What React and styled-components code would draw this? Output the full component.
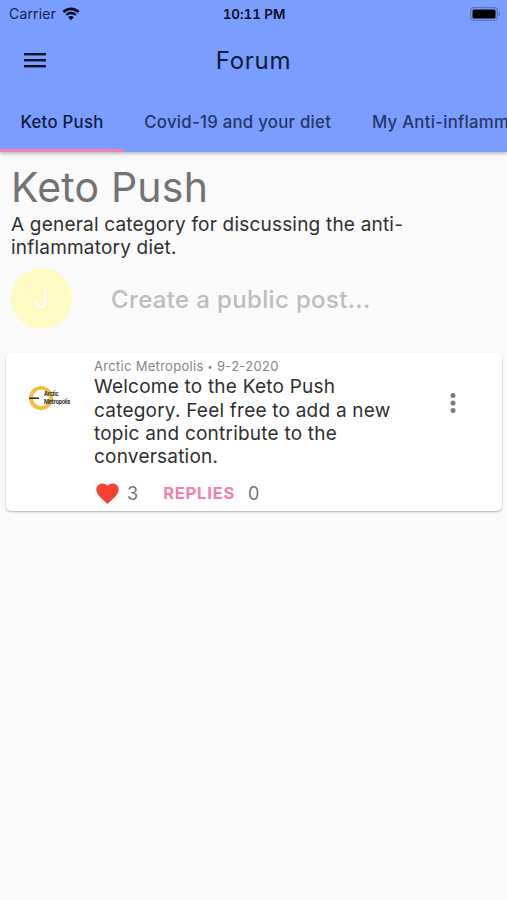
import React from "react";
import styled, { createGlobalStyle } from "styled-components";

const tabs = ["Keto Push", "Covid-19 and your diet", "My Anti-inflammatory"];

const posts = [
  {
    id: 1,
    author: "Arctic Metropolis",
    date: "9-2-2020",
    body: [
      "Welcome to the Keto Push",
      "category. Feel free to add a new",
      "topic and contribute to the",
      "conversation.",
    ],
    likes: 3,
    replies: 0,
  },
];

const WifiIcon = () => (
  <svg width="18" height="14" viewBox="0 0 20 15" fill="none" stroke="#0a0f20">
    <path d="M1.5 5.3a12 12 0 0 1 17 0" strokeWidth="3" />
    <path d="M4.7 8.6a7.5 7.5 0 0 1 10.6 0" strokeWidth="2.7" />
    <path d="M10 14.4l-3.2-3.3a4.5 4.5 0 0 1 6.4 0z" fill="#0a0f20" stroke="none" />
  </svg>
);

const BatteryIcon = () => (
  <svg width="31" height="14" viewBox="0 0 31 14">
    <rect x="0.7" y="0.7" width="26.6" height="12.6" rx="3.4" fill="none" stroke="#5a75bb" strokeWidth="1.2" />
    <rect x="2.5" y="2.5" width="23" height="9" rx="1.6" fill="#000" />
    <path d="M28.6 4.8c1.9.6 1.9 3.8 0 4.4z" fill="#5a75bb" />
  </svg>
);

const MenuIcon = () => (
  <svg width="24" height="17" viewBox="0 0 24 17" fill="#0b1020">
    <rect x="1" y="1" width="22" height="2.4" />
    <rect x="1" y="7" width="22" height="2.4" />
    <rect x="1" y="13" width="22" height="2.4" />
  </svg>
);

const LogoMark = () => (
  <svg width="44" height="28" viewBox="0 0 44 28">
    <circle cx="13" cy="13" r="10.1" fill="none" stroke="#f3bf3b" strokeWidth="3.8" />
    <rect x="1" y="12.5" width="10" height="1.5" fill="#2b2b2b" />
  </svg>
);

const HeartIcon = () => (
  <svg width="27" height="27" viewBox="0 0 24 24" fill="#f44336">
    <path d="M12 21.35l-1.45-1.32C5.4 15.36 2 12.28 2 8.5 2 5.42 4.42 3 7.5 3c1.74 0 3.41.81 4.5 2.09C13.09 3.81 14.76 3 16.5 3 19.58 3 22 5.42 22 8.5c0 3.78-3.4 6.86-8.55 11.54L12 21.35z" />
  </svg>
);

const MoreIcon = () => (
  <svg width="6" height="20" viewBox="0 0 6 20" fill="#7b7b7b">
    <circle cx="3" cy="2.6" r="2.5" />
    <circle cx="3" cy="10" r="2.5" />
    <circle cx="3" cy="17.4" r="2.5" />
  </svg>
);

const Post = ({ post }) => (
  <Card>
    <LogoColumn>
      <Logo>
        <LogoMark />
        <LogoText>
          <div>Arctic</div>
          <div>Metropolis</div>
        </LogoText>
      </Logo>
    </LogoColumn>
    <PostContent>
      <Meta>
        {post.author} <Dot>•</Dot> {post.date}
      </Meta>
      {post.body.map((line) => (
        <PostLine key={line}>{line}</PostLine>
      ))}
      <Actions>
        <HeartIcon />
        <Count>{post.likes}</Count>
        <Replies>REPLIES</Replies>
        <Count>{post.replies}</Count>
      </Actions>
    </PostContent>
    <MoreButton aria-label="More">
      <MoreIcon />
    </MoreButton>
  </Card>
);

const App = () => {
  return (
    <>
      <GlobalStyle />
      <Screen>
        <Header>
          <StatusBar>
            <Carrier>
              <span>Carrier</span>
              <WifiIcon />
            </Carrier>
            <Time>10:11 PM</Time>
            <Battery>
              <BatteryIcon />
            </Battery>
          </StatusBar>
          <Toolbar>
            <MenuButton aria-label="Menu">
              <MenuIcon />
            </MenuButton>
            <Title>Forum</Title>
          </Toolbar>
          <Tabs>
            {tabs.map((tab, index) => (
              <Tab key={tab} $active={index === 0}>
                {tab}
              </Tab>
            ))}
          </Tabs>
        </Header>
        <Heading>Keto Push</Heading>
        <Description>
          A general category for discussing the anti-
          <br />
          inflammatory diet.
        </Description>
        <CreatePost>
          <Avatar>J</Avatar>
          <Prompt>Create a public post...</Prompt>
        </CreatePost>
        {posts.map((post) => (
          <Post key={post.id} post={post} />
        ))}
      </Screen>
    </>
  );
};

export default App;

const GlobalStyle = createGlobalStyle`
  * {
    box-sizing: border-box;
  }

  body {
    margin: 0;
    background-color: #fafafa;
    font-family: Inter, "Liberation Sans", sans-serif;
  }

  svg {
    display: block;
    flex-shrink: 0;
  }

  button {
    display: flex;
    padding: 0;
    border: none;
    background: none;
  }
`;

const Screen = styled.div`
  height: 900px;
  overflow: hidden;
  background-color: #fafafa;
`;

const Header = styled.header`
  height: 152px;
  background-color: #7a9eff;
  box-shadow: 0 1px 4px rgba(0, 0, 0, 0.35);
`;

const StatusBar = styled.div`
  display: grid;
  grid-template-columns: 1fr auto 1fr;
  align-items: center;
  height: 27px;
  padding: 0 6px 0 9px;
`;

const Carrier = styled.div`
  display: flex;
  align-items: center;
  gap: 6px;
  color: #17213f;
  font-size: 14px;
  letter-spacing: 0.15px;
`;

const Time = styled.div`
  margin-right: 2px;
  color: #0b1124;
  font-size: 13.5px;
  font-weight: 600;
  font-feature-settings: "tnum";
  letter-spacing: -0.1px;
`;

const Battery = styled.div`
  display: flex;
  justify-content: flex-end;
`;

const Toolbar = styled.div`
  display: grid;
  grid-template-columns: 60px 1fr 60px;
  align-items: center;
  height: 66px;
`;

const MenuButton = styled.button`
  margin-left: 23px;
`;

const Title = styled.div`
  color: #101a35;
  font-size: 24px;
  font-weight: 400;
  letter-spacing: 0.7px;
  text-align: center;
`;

const Tabs = styled.nav`
  display: flex;
  height: 59px;
  overflow: hidden;
`;

const Tab = styled.div`
  flex-shrink: 0;
  padding: 0 20.4px;
  border-bottom: 3px solid ${(props) => (props.$active ? "#f57fae" : "transparent")};
  color: ${(props) => (props.$active ? "#101b3c" : "#263766")};
  font-size: 16.8px;
  font-weight: 500;
  line-height: 59px;
  letter-spacing: 0.25px;
  white-space: nowrap;
`;

const Heading = styled.h1`
  margin: 10px 0 0 11px;
  color: #737373;
  font-size: 41px;
  font-weight: 400;
  line-height: 50px;
  letter-spacing: 0.2px;
`;

const Description = styled.p`
  margin: 1px 0 0 11px;
  color: #303030;
  font-size: 19px;
  line-height: 23.2px;
  letter-spacing: 0.2px;
`;

const CreatePost = styled.div`
  display: flex;
  align-items: center;
  gap: 39px;
  margin: 8.8px 0 0 11px;
`;

const Avatar = styled.div`
  width: 61px;
  height: 61px;
  border-radius: 50%;
  background-color: #fff9c4;
  color: #fffef5;
  font-size: 26px;
  line-height: 61px;
  text-align: center;
`;

const Prompt = styled.div`
  padding-top: 1px;
  color: #bdbdbd;
  font-size: 24px;
  font-weight: 500;
  letter-spacing: 0.35px;
`;

const Card = styled.article`
  display: flex;
  height: 158px;
  margin: 24px 5px 0 6px;
  border-radius: 5px;
  background-color: #fff;
  box-shadow: 0 1px 2px rgba(0, 0, 0, 0.3);
`;

const LogoColumn = styled.div`
  width: 88px;
  padding: 32px 0 0 22px;
`;

const Logo = styled.div`
  position: relative;
  width: 44px;
`;

const LogoText = styled.div`
  position: absolute;
  top: 5px;
  left: 16px;
  color: #2b2b2b;
  font-size: 6.5px;
  font-weight: 700;
  line-height: 8px;
  letter-spacing: -0.3px;
  transform: scaleX(0.84);
  transform-origin: left;
`;

const PostContent = styled.div`
  width: 346px;
  padding-top: 5px;
`;

const Meta = styled.div`
  color: #858585;
  font-size: 13px;
  line-height: 17px;
  letter-spacing: 0.3px;
`;

const Dot = styled.span`
  font-size: 9px;
  vertical-align: 1px;
`;

const PostLine = styled.div`
  color: #303030;
  font-size: 19px;
  line-height: 23.3px;
  letter-spacing: 0.22px;
  white-space: nowrap;
`;

const Actions = styled.div`
  display: flex;
  align-items: center;
  height: 28px;
  margin-top: 11px;
`;

const Count = styled.span`
  margin-left: 6px;
  color: #757575;
  font-size: 18px;
`;

const Replies = styled.span`
  margin: 0 7px 0 25px;
  color: #f57fae;
  font-size: 16.5px;
  font-weight: 700;
  letter-spacing: 0.8px;
`;

const MoreButton = styled.button`
  align-self: flex-start;
  margin: 40px 0 0 10px;
`;
